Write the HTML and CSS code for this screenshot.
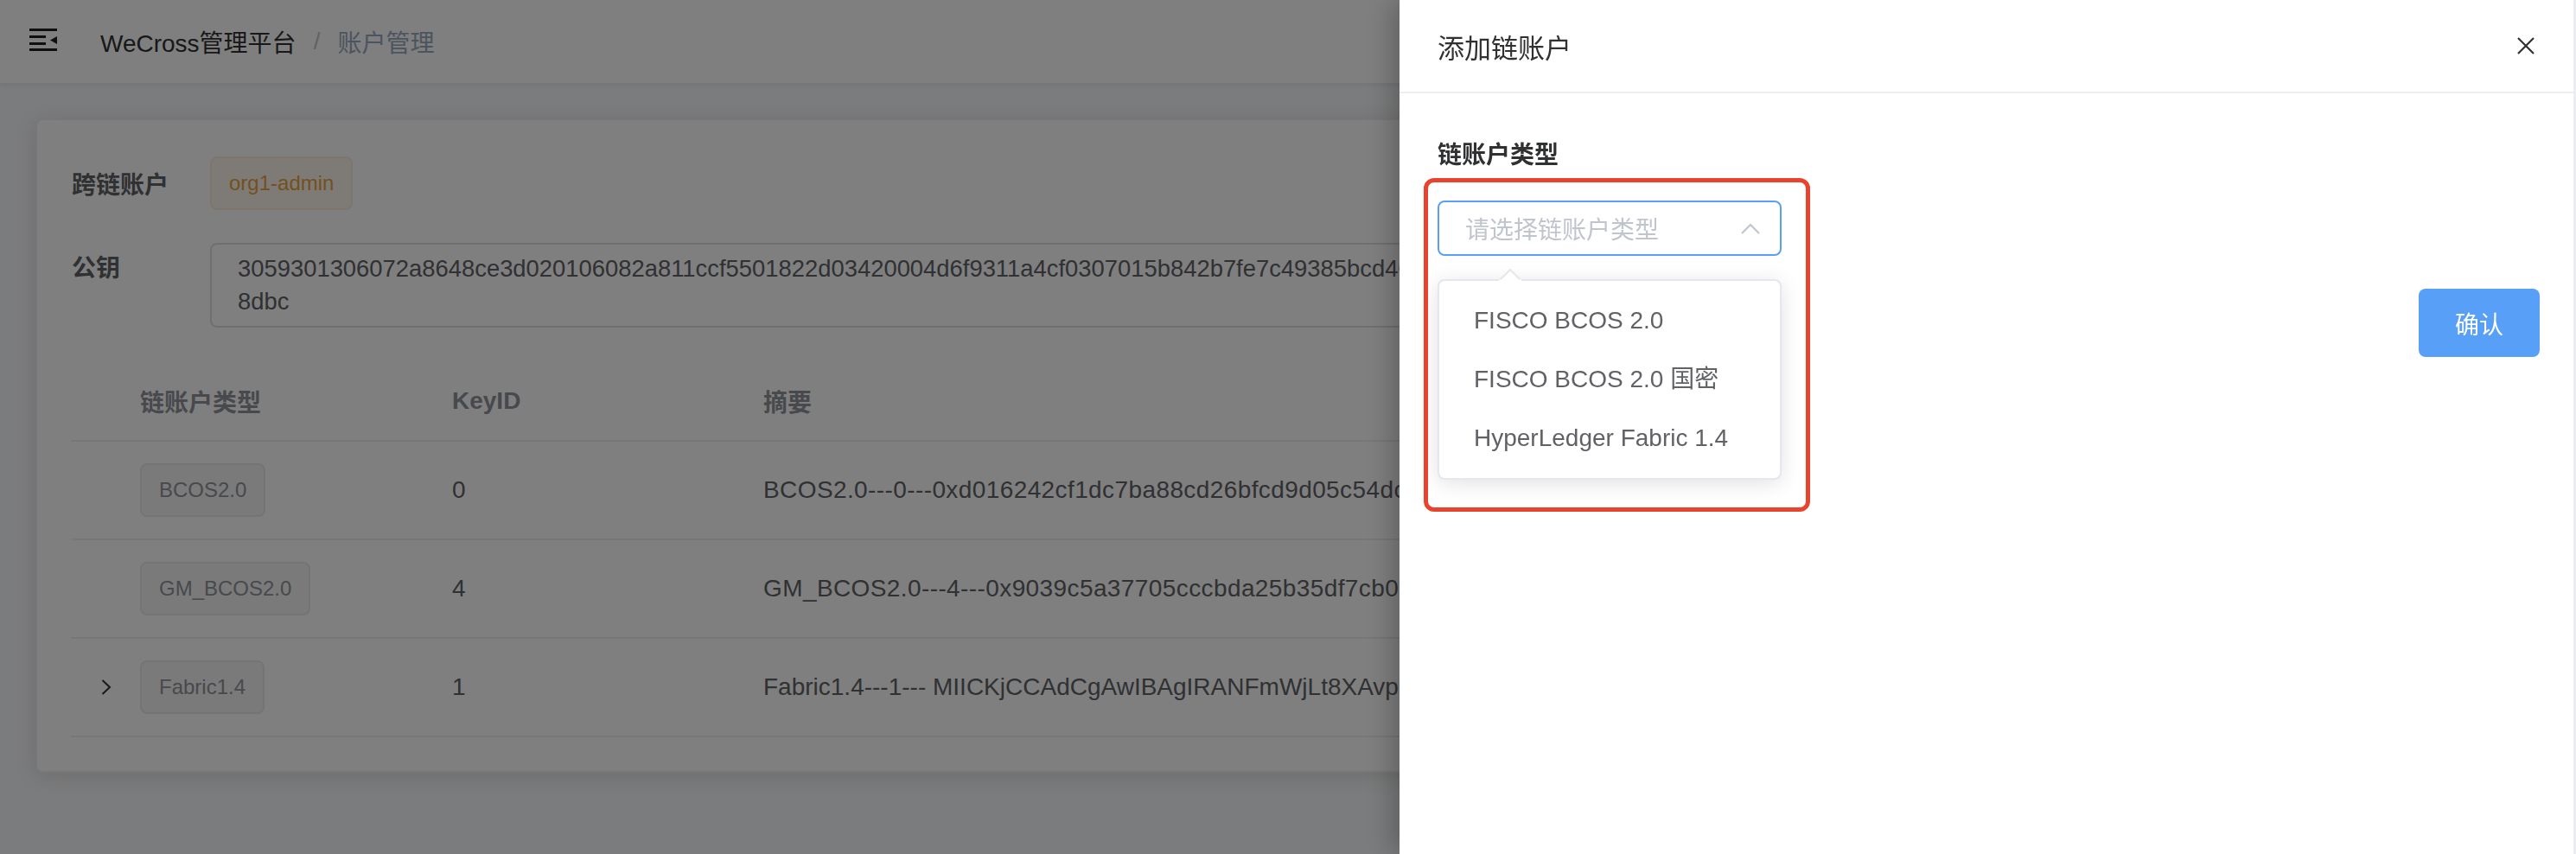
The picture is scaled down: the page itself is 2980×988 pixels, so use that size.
FILE: index.html
```html
<!DOCTYPE html>
<html lang="zh-CN">
<head>
<meta charset="utf-8">
<title>账户管理 - WeCross管理平台</title>
<link rel="stylesheet" href="styles.css">
</head>
<body>
<div class="app">
  <header class="topbar">
    <svg class="hamburger" width="32" height="26" viewBox="0 0 32 26">
      <rect x="0" y="0" width="32" height="3"/>
      <rect x="0" y="8" width="19" height="3"/>
      <rect x="0" y="16" width="19" height="3"/>
      <rect x="0" y="23" width="32" height="3"/>
      <polygon points="24,13.5 32,9 32,18"/>
    </svg>
    <nav class="crumb">
      <span class="crumb-home">WeCross管理平台</span>
      <span class="crumb-sep">/</span>
      <span class="crumb-cur">账户管理</span>
    </nav>
  </header>

  <main class="main">
    <section class="card">
      <div class="form-row">
        <div class="form-label">跨链账户</div>
        <span class="tag tag-warn">org1-admin</span>
      </div>
      <div class="form-row form-row-key">
        <div class="form-label form-label-top">公钥</div>
        <div class="keybox">
          <div class="keyline">3059301306072a8648ce3d020106082a811ccf5501822d03420004d6f9311a4cf0307015b842b7fe7c49385bcd40a7e3c1b05f28d94e61b37c2a90f4e58d1c6b72a3e9f0452bd8c71e6a09f34b2c5e7d18a</div>
          <div class="keyline">8dbc</div>
        </div>
      </div>

      <div class="tbl">
        <div class="tr thead">
          <div class="cell cell-exp"></div>
          <div class="cell">链账户类型</div>
          <div class="cell">KeyID</div>
          <div class="cell">摘要</div>
        </div>
        <div class="tr trow">
          <div class="cell cell-exp"></div>
          <div class="cell"><span class="tag tag-info">BCOS2.0</span></div>
          <div class="cell">0</div>
          <div class="cell cell-hex">BCOS2.0---0---0xd016242cf1dc7ba88cd26bfcd9d05c54dc3a81e7f2b4</div>
        </div>
        <div class="tr trow">
          <div class="cell cell-exp"></div>
          <div class="cell"><span class="tag tag-info">GM_BCOS2.0</span></div>
          <div class="cell">4</div>
          <div class="cell cell-hex">GM_BCOS2.0---4---0x9039c5a37705cccbda25b35df7cb0b6e41d9a2c7f5</div>
        </div>
        <div class="tr trow">
          <div class="cell cell-exp">
            <svg width="12" height="18" viewBox="0 0 12 18"><path d="M1.5 1 L10 9 L1.5 17" fill="none" stroke="#303133" stroke-width="2"/></svg>
          </div>
          <div class="cell"><span class="tag tag-info">Fabric1.4</span></div>
          <div class="cell">1</div>
          <div class="cell">Fabric1.4---1--- MIICKjCCAdCgAwIBAgIRANFmWjLt8XAvpQe2bTz9kRwCgYIKoZI</div>
        </div>
      </div>
    </section>
  </main>
</div>

<div class="mask"></div>

<aside class="drawer">
  <div class="drawer-header">
    <span class="drawer-title">添加链账户</span>
    <svg class="close" width="20" height="20" viewBox="0 0 20 20"><path d="M1 1 L19 19 M19 1 L1 19" stroke="#303133" stroke-width="2.2" fill="none"/></svg>
  </div>
  <div class="drawer-body">
    <div class="field-label">链账户类型</div>
    <div class="select">
      <span class="placeholder">请选择链账户类型</span>
      <svg class="chevron" width="22" height="13" viewBox="0 0 22 13"><path d="M1 12 L11 2 L21 12" fill="none" stroke="#c0c4cc" stroke-width="2"/></svg>
      <div class="dropdown">
        <svg class="pop-arrow" width="26" height="14" viewBox="0 0 26 14"><polygon points="0,14 13,1 26,14" fill="#fff" stroke="#e4e7ed" stroke-width="2"/><rect x="0" y="12.5" width="26" height="2" fill="#fff"/></svg>
        <div class="opt">FISCO BCOS 2.0</div>
        <div class="opt">FISCO BCOS 2.0 国密</div>
        <div class="opt">HyperLedger Fabric 1.4</div>
      </div>
    </div>
    <div class="actions">
      <button class="btn-primary">确认</button>
    </div>
  </div>
  <div class="annot"></div>
</aside>
</body>
</html>
```

FILE: styles.css
```css
html, body {
  margin: 0;
  padding: 0;
}
body {
  width: 2980px;
  height: 988px;
  overflow: hidden;
  position: relative;
  background: #f7f8fa;
  font-family: "Liberation Sans", "Noto Sans CJK SC", sans-serif;
  color: #606266;
}

/* ---------- top bar ---------- */
.topbar {
  height: 96px;
  box-sizing: border-box;
  background: #fff;
  display: flex;
  align-items: center;
  padding-left: 34px;
  box-shadow: 0 2px 6px rgba(0, 21, 41, 0.08);
}
.hamburger {
  fill: #1f1f1f;
  margin-top: -4px;
}
.crumb {
  margin-left: 50px;
  font-size: 28px;
  display: flex;
  align-items: center;
}
.crumb-home { color: #303133; }
.crumb-sep { color: #c0c4cc; margin: 0 20px; }
.crumb-cur { color: #97a8be; }

/* ---------- main card ---------- */
.main {
  padding: 41px 41px 0;
}
.card {
  background: #fff;
  border: 2px solid #ebeef5;
  border-radius: 8px;
  box-shadow: 0 4px 24px rgba(0, 0, 0, 0.12);
  padding: 33px 40px 39px;
}
.form-row {
  display: flex;
  align-items: center;
  height: 80px;
}
.form-row-key {
  height: auto;
  align-items: flex-start;
  margin-top: 29px;
}
.form-label {
  width: 160px;
  flex: none;
  font-size: 28px;
  font-weight: bold;
  color: #606266;
}
.form-label-top {
  padding-top: 11px;
  line-height: 38px;
}
.tag {
  display: inline-flex;
  align-items: center;
  box-sizing: border-box;
  height: 62px;
  padding: 0 20px;
  border: 2px solid;
  border-radius: 8px;
  font-size: 24px;
  white-space: nowrap;
}
.tag-warn {
  background: #fdf6ec;
  border-color: #faecd8;
  color: #e6a23c;
}
.tag-info {
  background: #f4f4f5;
  border-color: #e9e9eb;
  color: #909399;
}
.keybox {
  flex: 1;
  min-width: 0;
  border: 2px solid #dcdfe6;
  border-radius: 8px;
  padding: 9px 30px;
  font-size: 27.4px;
  line-height: 38px;
  color: #606266;
}
.keyline {
  white-space: nowrap;
  overflow: hidden;
}

/* ---------- table ---------- */
.tbl {
  margin-top: 39px;
  margin-left: -1px;
}
.tr {
  display: grid;
  grid-template-columns: 60px 361px 360px 1fr;
  align-items: center;
  border-bottom: 2px solid #ebeef5;
  box-sizing: border-box;
  font-size: 28px;
}
.thead {
  height: 93px;
  color: #909399;
  font-weight: bold;
}
.trow {
  height: 114px;
  color: #606266;
}
.cell {
  padding-left: 20px;
  white-space: nowrap;
  overflow: hidden;
}
.cell-hex {
  letter-spacing: 0.4px;
}
.cell-exp {
  padding-left: 35px;
  display: flex;
  align-items: center;
}

/* ---------- mask ---------- */
.mask {
  position: fixed;
  inset: 0;
  background: rgba(0, 0, 0, 0.5);
}

/* ---------- drawer ---------- */
.drawer {
  position: fixed;
  top: 0;
  right: 0;
  width: 1361px;
  height: 988px;
  box-sizing: border-box;
  background: #fff;
  border-right: 3px solid #ececf3;
  box-shadow: -8px 0 30px rgba(0, 0, 0, 0.25);
  display: flex;
  flex-direction: column;
}
.drawer-header {
  height: 108px;
  box-sizing: border-box;
  border-bottom: 2px solid #ebeef5;
  display: flex;
  align-items: center;
  justify-content: space-between;
  padding: 0 45px 0 44px;
}
.drawer-title {
  font-size: 31px;
  color: #303133;
}
.drawer-body {
  padding: 52px 39px 0 44px;
}
.field-label {
  font-size: 28px;
  line-height: 40px;
  font-weight: bold;
  color: #303133;
}
.select {
  position: relative;
  margin-top: 32px;
  width: 398px;
  height: 64px;
  box-sizing: border-box;
  border: 2px solid #5a9ff7;
  border-radius: 8px;
  display: flex;
  align-items: center;
  padding: 0 23px 0 30px;
}
.placeholder {
  flex: 1;
  font-size: 28px;
  color: #c0c4cc;
}
.chevron {
  flex: none;
}
.dropdown {
  position: absolute;
  top: 89px;
  left: -2px;
  width: 398px;
  box-sizing: border-box;
  background: #fff;
  border: 2px solid #e4e7ed;
  border-radius: 8px;
  box-shadow: 0 4px 24px rgba(0, 0, 0, 0.12);
  padding: 12px 0;
}
.pop-arrow {
  position: absolute;
  top: -14px;
  left: 69px;
}
.opt {
  height: 68px;
  line-height: 68px;
  padding: 0 40px;
  font-size: 28px;
  color: #606266;
  white-space: nowrap;
}
.actions {
  display: flex;
  justify-content: flex-end;
  margin-top: 38px;
}
.btn-primary {
  width: 140px;
  height: 79px;
  border: none;
  border-radius: 8px;
  background: #589ff8;
  color: #fff;
  font-family: "Liberation Sans", "Noto Sans CJK SC", sans-serif;
  font-size: 28px;
  padding: 0;
}
.annot {
  position: absolute;
  left: 28px;
  top: 206px;
  width: 447px;
  height: 386px;
  box-sizing: border-box;
  border: 5px solid #e8432d;
  border-radius: 12px;
}
```
